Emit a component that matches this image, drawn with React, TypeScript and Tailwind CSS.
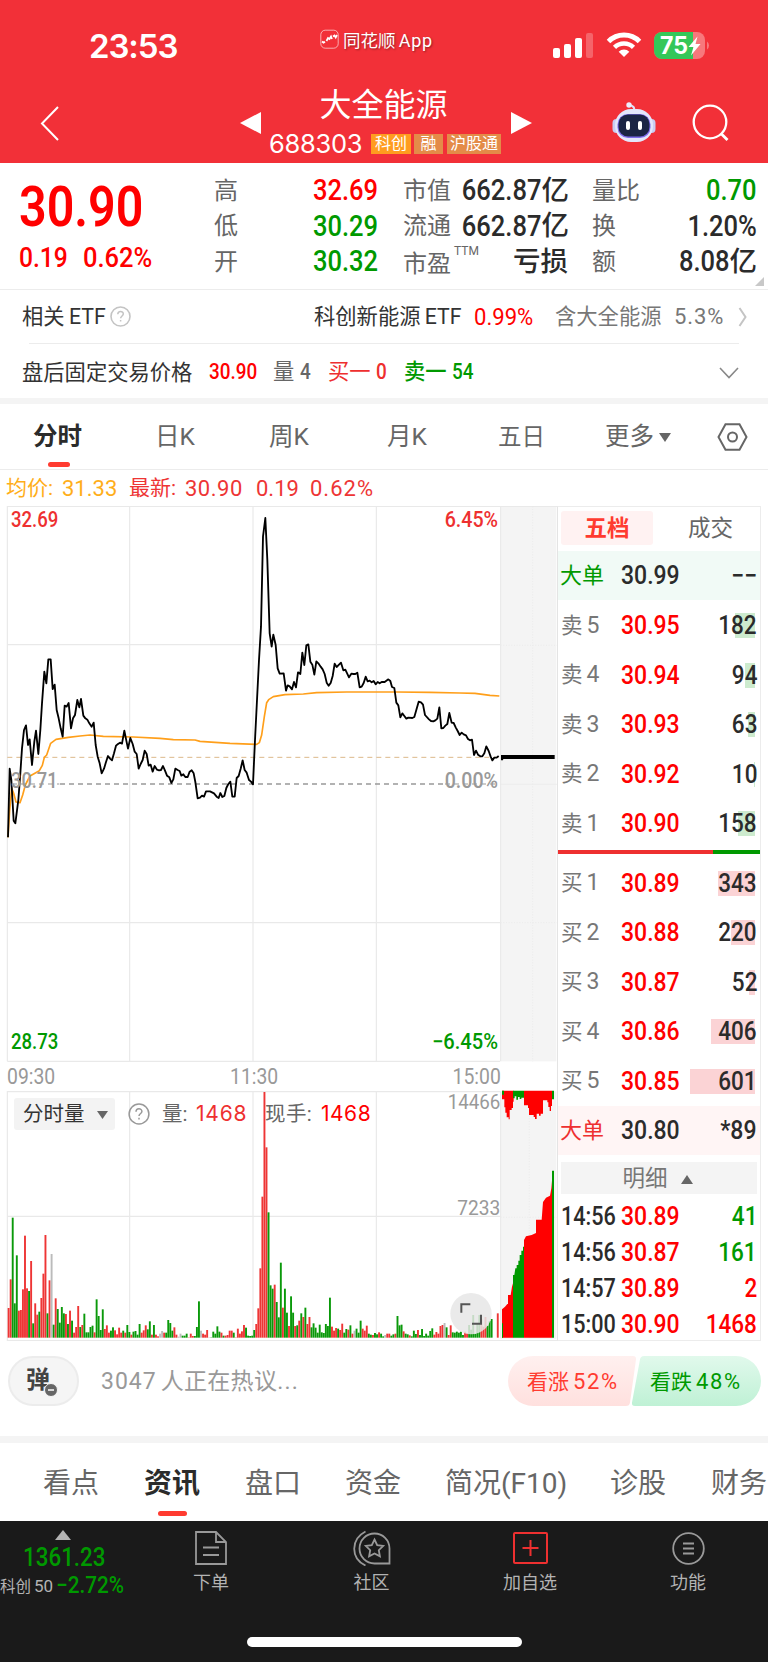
import clsx from 'clsx'

const PRICE_LINE =
  '24,1012 29,806 34,840 41,962 46,970 55,900 61,820 66,745 72,690 78,676 84,735 89,718 96,795 103,725 108,692 115,762 121,690 126,610 133,515 139,550 145,478 152,478 158,567 164,554 170,630 176,655 182,685 188,710 194,617 200,620 206,609 213,685 219,655 225,645 232,600 238,622 243,597 250,647 256,655 262,659 268,670 275,680 281,668 287,735 293,770 299,790 305,820 312,806 318,786 324,768 330,776 336,781 342,760 348,737 354,732 360,728 366,731 373,692 379,722 384,746 391,714 398,732 404,755 410,762 416,806 422,792 428,780 434,752 440,762 446,797 452,794 458,815 464,798 471,809 477,811 483,810 489,798 495,812 501,827 508,832 514,849 520,838 526,806 533,810 539,813 544,827 550,823 556,831 563,831 569,815 575,811 581,820 586,846 593,895 600,893 606,887 612,890 618,874 630,874 642,880 650,890 656,894 661,879 667,891 673,888 679,864 685,852 691,845 697,890 704,890 710,834 716,828 722,806 728,781 734,810 740,818 747,840 753,845 759,853 765,720 771,600 777,480 783,380 789,110 796,54 802,180 809,400 815,440 820,404 827,435 833,505 839,521 851,520 858,572 863,556 869,559 876,568 882,546 888,562 894,517 901,522 907,458 913,495 919,436 925,433 931,485 937,494 943,524 949,484 955,490 962,500 968,508 974,522 980,548 986,557 992,549 998,528 1004,491 1010,501 1017,494 1023,488 1030,511 1036,509 1047,532 1054,521 1060,522 1066,522 1072,518 1079,562 1085,560 1091,549 1097,530 1103,544 1109,542 1115,547 1121,543 1127,553 1133,546 1139,550 1145,546 1154,546 1165,538 1171,543 1176,561 1183,564 1189,608 1195,616 1201,652 1207,640 1213,648 1219,656 1225,653 1237,654 1243,651 1250,626 1256,605 1263,607 1269,614 1275,645 1287,658 1293,663 1300,664 1306,661 1312,656 1318,622 1324,685 1330,684 1336,677 1342,672 1348,639 1355,668 1361,669 1367,682 1373,693 1379,705 1385,698 1391,703 1398,706 1404,717 1410,721 1416,719 1422,765 1428,752 1434,764 1441,769 1447,769 1453,760 1459,739 1466,753 1472,770 1477,781 1483,773 1490,773 1496,768'

const AVERAGE_LINE =
  'M24,1012 L29,930 L35,865 L41,880 L48,906 L60,908 L68,885 L76,855 L90,828 L118,812 L127,796 L133,772 L140,765 L152,730 L168,718 L205,712 L240,708 L270,705 L310,709 L400,711 L480,715 L520,719 L585,720 L600,724 L690,730 L770,733 L778,728 L785,705 L793,650 L800,608 L806,599 L820,590 L855,584 L910,582 L950,578 L1040,576 L1190,576 L1290,577 L1380,579 L1425,580 L1470,586 L1498,588'

// top of each minute bar followed by its colour: r up, g down, n flat
const VOLUME =
  '834r 748r 563g 820g 676g 842r 840r 778r 617r 775r 783g 693r 880g 820r 854r 845g 804r 731r 615r 850g 751r 672n 884g 805r 837g 878g 831g 850g 852r 882g 842r 872g 908r 891r 828r 891g 885r 851g 907g 907g 891g 887g 907r 808g 858g 900g 838g 897r 886r 908r 902g 892g 901r 913r 893r 908r 902g 908r 885g 906g 914r 905g 903g 914g 882g 908r 901r 886r 898g 874g 914r 885g 914r 919r 911n 903n 908r 908g 870g 879g 902g 892r 914r 920n 911n 917g 917g 911g 922r 911r 918r 918g 891g 814g 902n 911r 914r 900r 922n 922g 905g 911g 889g 905g 908r 917g 917r 915r 902r 902r 908g 922r 896r 911r 904r 885r 893g 917g 918g 917g 900g 882r 835r 715r 500r 186r 352r 547g 766g 776g 764r 816g 862g 698g 833r 776g 848g 888r 799g 848g 888r 886g 872r 850g 861r 833g 882r 861r 892g 880g 893g 908g 884g 907g 909g 882g 888g 803g 890r 902r 894r 896g 900r 881r 908g 897g 899r 886g 911r 902n 896g 908g 872g 896r 902r 887r 911g 914g 915r 909g 913g 907r 911g 919g 915n 911r 911r 917g 913g 911r 858g 886g 884g 904r 911g 913g 916r 919g 902g 912g 900r 915g 897g 918g 911g 917g 903g 895g 914r 906r 911r 888r 885r 879n 892g 915r 886r 907g 908g 905g 908g 905g 915g 905r 909r 885g 899g 855g 911g 880g 855g 868r 890r 861r 887g 873g 867g 923n 923n 850r'

const BAR_COLORS: Record<string, string> = {
  r: '#ee3535',
  g: '#0a990a',
  n: '#bbbbbb',
}

const bars = VOLUME.split(' ').map((item) => ({
  top: parseInt(item),
  color: BAR_COLORS[item.slice(-1)],
}))

const sells = [
  { label: '卖5', price: '30.95', amount: 182 },
  { label: '卖4', price: '30.94', amount: 94 },
  { label: '卖3', price: '30.93', amount: 63 },
  { label: '卖2', price: '30.92', amount: 10 },
  { label: '卖1', price: '30.90', amount: 158 },
]

const buys = [
  { label: '买1', price: '30.89', amount: 343 },
  { label: '买2', price: '30.88', amount: 220 },
  { label: '买3', price: '30.87', amount: 52 },
  { label: '买4', price: '30.86', amount: 406 },
  { label: '买5', price: '30.85', amount: 601 },
]

const trades = [
  { time: '14:56', price: '30.89', amount: '41', color: 'text-[#009900]' },
  { time: '14:56', price: '30.87', amount: '161', color: 'text-[#009900]' },
  { time: '14:57', price: '30.89', amount: '2', color: 'text-[#ff0000]' },
  { time: '15:00', price: '30.90', amount: '1468', color: 'text-[#ff0000]' },
]

function Din({
  children,
  right,
  narrow = 'scale-x-[0.88]',
  weight = 'font-medium',
  className,
}: {
  children: React.ReactNode
  right?: boolean
  narrow?: string
  weight?: string
  className?: string
}) {
  return (
    <span
      className={clsx(
        'inline-block whitespace-pre',
        narrow,
        weight,
        right ? 'origin-right' : 'origin-left',
        className
      )}
    >
      {children}
    </span>
  )
}

function StatusBar() {
  return (
    <div className="flex h-[80px] items-start pt-[28px] pl-[89px] text-white">
      <div className="w-[231px] pt-[2px] font-['Inter'] text-[33px] leading-[32px] font-semibold tracking-[-1.1px]">
        23:53
      </div>
      <svg className="mt-px" width="19" height="20" viewBox="0 0 19 20" fill="none">
        <rect x="0.8" y="1.2" width="17.4" height="18" rx="4.5" stroke="#fff" strokeOpacity="0.6" />
        <path
          d="M2 12.500l1.500 1.200 1.500-1M6.500 12l1.500-3 1.500 1 1.500-2.500 1 2.500M13 7.500l1.500-1 1.200 2 1.300-2.500"
          stroke="#fff"
          strokeWidth="1.700"
        />
      </svg>
      <div className="ml-1 w-[210px] pt-[3px] text-[17.500px] leading-[20px] [text-shadow:1px_1px_2px_#0006]">
        同花顺 <span className="-ml-[1px] text-[18px] tracking-[0.600px]">App</span>
      </div>
      <svg className="mt-[5px]" width="40" height="25" viewBox="0 0 40 25" fill="#fff">
        <rect x="0" y="15" width="7" height="10" rx="2" />
        <rect x="11" y="11" width="7" height="14" rx="2" />
        <rect x="22" y="5" width="7" height="20" rx="2" />
        <rect x="33" y="0" width="7" height="25" rx="2" opacity="0.25" />
      </svg>
      <svg className="mt-[4px] ml-[13px]" width="36" height="26" viewBox="0 0 36 26" fill="none">
        <path d="M2.500 9.500a22 22 0 0 1 31 0" stroke="#fff" strokeWidth="5" />
        <path d="M8.500 15.300a13.500 13.500 0 0 1 19 0" stroke="#fff" strokeWidth="4.500" />
        <path d="M18 25l-5.300-5.300a7.600 7.600 0 0 1 10.600 0z" fill="#fff" />
      </svg>
      <svg className="mt-[4px] ml-[12px]" width="57" height="27" viewBox="0 0 57 27">
        <clipPath id="battery">
          <rect width="51" height="27" rx="8" />
        </clipPath>
        <g clipPath="url(#battery)">
          <rect width="51" height="27" fill="#f7787c" />
          <rect width="39" height="27" fill="#34c759" />
        </g>
        <path d="M53 9.500a5 5 0 0 1 0 8z" fill="#f7787c" />
        <text x="6" y="22" fill="#fff" fontFamily="Inter" fontSize="24" fontWeight="700" textLength="28" lengthAdjust="spacingAndGlyphs">
          75
        </text>
        <path d="M43.500 4.500L34.500 15h5l-2.500 8.500L46.500 12h-5z" fill="#fff" />
      </svg>
    </div>
  )
}

function Header() {
  return (
    <header className="h-[163px] bg-[#f23038] text-white">
      <StatusBar />
      <div className="flex h-[83px] pl-[39px]">
        <svg className="mt-[25px]" width="21" height="37" viewBox="0 0 21 37" fill="none">
          <path d="M19 2L3 18.500 19 35" stroke="#fff" strokeWidth="2" />
        </svg>
        <svg className="mt-[31px] ml-[180px]" width="21" height="24" viewBox="0 0 21 24">
          <path d="M0 12L21 1v22z" fill="#fff" />
        </svg>
        <div className="w-[250px]">
          <div className="mt-[5px] pr-[5px] text-center text-[32px] leading-[40px]">大全能源</div>
          <div className="mt-[8px] flex items-center pl-[8px]">
            <span className="w-[102px] font-['Inter'] text-[25.500px] leading-[22px] tracking-[-0.300px]">
              688303
            </span>
            <span className="h-[20px] w-[40px] bg-[#ff9c1f] text-center text-[16px] leading-[19px]">
              科创
            </span>
            <span className="ml-[3px] h-[20px] w-[29px] bg-[#e48b48] text-center text-[16px] leading-[19px]">
              融
            </span>
            <span className="ml-[4px] h-[20px] w-[54px] bg-[#e48b48] text-center text-[16px] leading-[19px]">
              沪股通
            </span>
          </div>
        </div>
        <svg className="mt-[31px]" width="21" height="24" viewBox="0 0 21 24">
          <path d="M21 12L0 1v22z" fill="#fff" />
        </svg>
        <svg className="mt-[22px] ml-[80px]" width="44" height="41" viewBox="0 0 44 41">
          <path d="M22 8c1-3-1-4-4-5" stroke="#dfe2fa" strokeWidth="2" fill="none" />
          <circle cx="17" cy="3" r="2.700" fill="#eceefe" />
          <rect x="0.500" y="17" width="9" height="14" rx="4" fill="#c9cdf2" />
          <rect x="34.500" y="17" width="9" height="14" rx="4" fill="#c9cdf2" />
          <rect x="3" y="7" width="38" height="33" rx="16" fill="#e3e6fb" />
          <rect x="5.500" y="12" width="33" height="24" rx="10.500" fill="#7e6bea" />
          <rect x="6.500" y="12.500" width="31" height="22" rx="9.500" fill="#1b2444" />
          <rect x="14" y="19" width="4" height="9" rx="2" fill="#fff" />
          <rect x="26" y="19" width="4" height="9" rx="2" fill="#fff" />
        </svg>
        <svg className="mt-[24px] ml-[36px]" width="38" height="38" viewBox="0 0 38 38" fill="none">
          <circle cx="18" cy="18" r="16.300" stroke="#fff" strokeWidth="2.300" />
          <path d="M29.500 30L35.500 36" stroke="#fff" strokeWidth="2.800" />
        </svg>
      </div>
    </header>
  )
}

function Stat({
  label,
  value,
  unit,
  color = 'text-[#2b2b2b]',
  sup,
}: {
  label: string
  value?: string
  unit?: string
  color?: string
  sup?: string
}) {
  return (
    <div className="flex h-[35.500px] items-center justify-between whitespace-nowrap">
      <span className={clsx('flex text-[24px] text-[#666]', sup && 'mt-[5px]')}>
        {label}
        {sup && <sup className="top-0 -mt-[3px] ml-[3px] text-[12px] leading-[16px]">{sup}</sup>}
      </span>
      <span className={clsx('flex items-center', color)}>
        {value && (
          <Din right className="text-[29px]">
            {value}
          </Din>
        )}
        {unit && <span className="text-[27.500px] leading-[30px] font-medium">{unit}</span>}
      </span>
    </div>
  )
}

function Quote() {
  return (
    <section className="relative flex h-[127px] border-b border-[#ececec]">
      <div className="w-[214px] pl-[19px] text-[#ff0000]">
        <Din className="mt-[16px] text-[55px] leading-[56px]" weight="font-semibold">
          30.90
        </Din>
        <div className="mt-[8px] flex text-[28px] leading-[30px]">
          <Din className="w-[64px]">0.19</Din>
          <Din narrow="scale-x-[0.91]">0.62%</Din>
        </div>
      </div>
      <div className="w-[164px] pt-[10px]">
        <Stat label="高" value="32.69" color="text-[#ff0000]" />
        <Stat label="低" value="30.29" color="text-[#009900]" />
        <Stat label="开" value="30.32" color="text-[#009900]" />
      </div>
      <div className="ml-[25px] w-[165px] pt-[10px]">
        <Stat label="市值" value="662.87" unit="亿" />
        <Stat label="流通" value="662.87" unit="亿" />
        <Stat label="市盈" unit="亏损" sup="TTM" />
      </div>
      <div className="ml-[24px] w-[165px] pt-[10px]">
        <Stat label="量比" value="0.70" color="text-[#009900]" />
        <Stat label="换" value="1.20%" />
        <Stat label="额" value="8.08" unit="亿" />
      </div>
      <svg className="absolute right-[4px] bottom-[3px]" width="9" height="9" viewBox="0 0 9 9">
        <path d="M9 0v9H0z" fill="#c8c8c8" />
      </svg>
    </section>
  )
}

function Related() {
  return (
    <section className="text-[21.300px] whitespace-nowrap text-[#333]">
      <div className="flex h-[53px] items-center pl-[22px]">
        <span className="w-[88px]">
          相关 <span className="-ml-[1px]">ETF</span>
        </span>
        <svg width="21" height="21" viewBox="0 0 21 21" fill="none" stroke="#c4c4c4">
          <circle cx="10.500" cy="10.500" r="9.500" strokeWidth="1.600" />
          <path d="M7.800 8.300c0-3.800 5.600-3.700 5.500-.3 0 1.800-2.700 2.200-2.700 4.300M10.600 14v1.600" strokeWidth="1.500" />
        </svg>
        <span className="ml-[183px] w-[160px]">
          科创新能源 <span className="-ml-[1px]">ETF</span>
        </span>
        <span className="w-[81px] text-[#ff0000]">
          <Din className="text-[24px]" narrow="scale-x-[0.92]" weight="font-normal">
            0.99%
          </Din>
        </span>
        <span className="w-[119px] text-[#777]">含大全能源</span>
        <span className="w-[64px] text-[22px] tracking-[0.900px] text-[#777]">5.3%</span>
        <svg width="9" height="20" viewBox="0 0 9 20" fill="none">
          <path d="M1.500 1l6 9-6 9" stroke="#c4c4c4" strokeWidth="2" />
        </svg>
      </div>
      <div className="mx-[29px] h-px bg-[#ececec]" />
      <div className="flex h-[54px] items-center pt-[3px] pl-[22px]">
        <span className="w-[187px]">盘后固定交易价格</span>
        <span className="w-[64px] text-[#ff0000]">
          <Din className="text-[21.500px]">30.90</Din>
        </span>
        <span className="w-[55px] text-[#666]">
          量 <Din className="text-[21.500px]">4</Din>
        </span>
        <span className="w-[76px] text-[#ee2f2f]">
          买一 <Din className="text-[21.500px]">0</Din>
        </span>
        <span className="w-[315px] text-[#009900]">
          <span className="font-medium">卖一</span> <Din className="text-[21.500px]">54</Din>
        </span>
        <svg width="20" height="12" viewBox="0 0 20 12" fill="none">
          <path d="M1 1l9 9.500L19 1" stroke="#888" strokeWidth="1.600" />
        </svg>
      </div>
    </section>
  )
}

function ChartTabs() {
  return (
    <nav className="flex h-[66px] items-center border-b border-[#ececec] pt-[2px] pl-[33px] text-[24.500px] whitespace-nowrap text-[#666]">
      <div className="relative w-[122px] font-bold text-[#2b2b2b]">
        分时
        <span className="absolute top-[43px] left-[15px] h-[5px] w-[22px] rounded-full bg-[#ff3b30]" />
      </div>
      <div className="w-[114px]">日K</div>
      <div className="w-[118px]">周K</div>
      <div className="w-[111px]">月K</div>
      <div className="w-[107px] text-[23.500px]">五日</div>
      <div className="flex w-[112px] items-center">
        更多
        <svg className="ml-[5px]" width="12" height="9" viewBox="0 0 12 9">
          <path d="M0 0h12L6 9z" fill="#666" />
        </svg>
      </div>
      <svg className="-mt-[2px]" width="31" height="28" viewBox="0 0 31 28" fill="none" stroke="#666" strokeWidth="2">
        <path d="M8.500 1.200h14L29.500 14l-7 12.800h-14L1.500 14z" />
        <circle cx="15.500" cy="14" r="4.500" />
      </svg>
    </nav>
  )
}

function PriceChart() {
  return (
    <svg className="block" width="557" height="556" viewBox="0 18 1671 1668" fill="none">
      <rect x="1501" y="18" width="168" height="1666" fill="#f4f4f4" />
      <g stroke="#e9e9e9" strokeWidth="3.500">
        <path d="M22 1684V19.500H1671M389 19V1684M759 19V1684M1129 19V1684M1502 19V1684M22 434H1500M22 1268H1500M22 1684H1500" />
        <path d="M1598 19V1684M1502 436H1671M1502 1268H1671" strokeDasharray="3 5" strokeWidth="2.500" />
        <path d="M1502 853H1671" strokeWidth="2" />
      </g>
      <path d="M22 772H1500" stroke="#dcb98a" strokeWidth="3" strokeDasharray="15 12" />
      <path d="M180 852H1330" stroke="#999" strokeWidth="4" strokeDasharray="15 12" />
      <path d={AVERAGE_LINE} stroke="#ff9f1a" strokeWidth="5" strokeLinejoin="round" />
      <polyline points={PRICE_LINE} stroke="#000" strokeWidth="5.500" strokeLinejoin="round" />
      <path d="M1504 771H1664" stroke="#000" strokeWidth="12" />
      <path d="M1503 765h9l-3 16h-6z" fill="#000" />
      <g fontFamily="Roboto" fontSize="64" fontWeight="500">
        <text x="33" y="80" fill="#ee3030" textLength="142" lengthAdjust="spacingAndGlyphs">
          32.69
        </text>
        <text x="1334" y="80" fill="#ee3030" textLength="160" lengthAdjust="spacingAndGlyphs">
          6.45%
        </text>
        <text x="33" y="863" fill="#999" textLength="140" lengthAdjust="spacingAndGlyphs">
          30.71
        </text>
        <text x="1334" y="863" fill="#999" textLength="160" lengthAdjust="spacingAndGlyphs">
          0.00%
        </text>
        <text x="33" y="1647" fill="#009900" textLength="142" lengthAdjust="spacingAndGlyphs">
          28.73
        </text>
        <text x="1296" y="1647" fill="#009900" textLength="198" lengthAdjust="spacingAndGlyphs">
          −6.45%
        </text>
      </g>
      <path d="M36 852H178M1335 852H1490" stroke="#999" strokeWidth="3" strokeDasharray="15 12" />
    </svg>
  )
}

function VolumeChart() {
  return (
    <div className="relative h-[254px]">
      <svg className="block" width="557" height="254" viewBox="0 180 1671 762" fill="none">
        <rect x="1502" y="184" width="167" height="742" fill="#f4f4f4" />
        <g stroke="#e9e9e9" strokeWidth="3.500">
          <path d="M1671 931.500H22V185H1502M389 185V925M759 185V925M1129 185V925M1502 185V925M22 559H1502" />
          <path d="M1588 185V925M1502 562H1671" strokeDasharray="3 5" strokeWidth="2.500" />
        </g>
        {bars.map((bar, i) => (
          <rect
            key={i}
            x={23 + i * 6.14}
            y={bar.top}
            width="5.700"
            height={923 - bar.top}
            fill={bar.color}
          />
        ))}
        <path
          d="M1506 923V838l9-8 7-8 2 0V795h8l4-25 3-10V923zM1572 923V630l6-11 17-4 13-6V569h17l4-53 9-13 12-6 4-22 2-23V923z"
          fill="#ff0000"
        />
        <path
          d="M1539 923V735h4l3-20 4 0V705h5V692h4V675h5V662h5V650h3V923zM1656 923V422h6V923zM1506 923V880h3v43z"
          fill="#009900"
        />
        <path
          d="M1506 182v26h7v24h3v16h4v14h6v6h3v-28h6v-6h4v-19h2v-33zM1572 182v44h12v8h3v21h14v6h4v6h5v-16h7v6h5v-6h7v-40h13v6h3v14h4v12h4v-15h3v-46z"
          fill="#ff0000"
        />
        <path
          d="M1539 182v23h5v-6h5v10h5v-8h5v6h5v-4h8v-21zM1656 182v26h6v-26zM1506 182h6v12h-6z"
          fill="#009900"
        />
        <g fontFamily="Roboto" fontSize="62" fill="#999">
          <text x="1343" y="237" textLength="158" lengthAdjust="spacingAndGlyphs">
            14466
          </text>
          <text x="1372" y="555" textLength="129" lengthAdjust="spacingAndGlyphs">
            7233
          </text>
        </g>
        <circle cx="1413" cy="851" r="62" fill="#e6e6e6" fillOpacity="0.850" />
        <path d="M1384 848V823h27M1443 854v27h-27" stroke="#555" strokeWidth="6" />
      </svg>
      <div className="absolute top-[8px] left-[14px] flex items-center text-[20.500px] whitespace-nowrap text-[#666]">
        <div className="flex h-[32px] w-[101px] items-center rounded-[3px] bg-[#f3f3f3] pt-px pl-[9px] text-[#333]">
          分时量
          <svg className="ml-[12px]" width="11" height="8" viewBox="0 0 11 8">
            <path d="M0 0h11L5.500 8z" fill="#666" />
          </svg>
        </div>
        <svg className="ml-[13px]" width="22" height="22" viewBox="0 0 22 22" fill="none" stroke="#999">
          <circle cx="11" cy="11" r="9.900" strokeWidth="1.500" />
          <path d="M8 8.800c0-4 6-3.900 5.900-.3 0 1.900-2.900 2.200-2.900 4.600M11 14.800v1.800" strokeWidth="1.500" />
        </svg>
        <div className="ml-[12px] flex w-[103px] items-center">
          <span className="w-[34px]">量:</span>
          <span className="font-['Inter'] text-[21px] tracking-[0.800px] text-[#ee3030]">1468</span>
        </div>
        <div className="flex items-center">
          <span className="w-[56px] tracking-[0.400px]">现手:</span>
          <span className="font-['Inter'] text-[21px] tracking-[0.500px] text-[#ff0000]">1468</span>
        </div>
      </div>
    </div>
  )
}

function Level({
  label,
  price,
  amount,
  tone,
}: {
  label: string
  price: string
  amount: number
  tone: 'sell' | 'buy'
}) {
  return (
    <div className="flex h-[49.500px] items-center pl-[3px]">
      <span className="flex w-[60px] items-baseline text-[21.500px] text-[#777]">
        {label[0]}
        <span className="ml-[4px] text-[23px]">{label[1]}</span>
      </span>
      <Din className="text-[25px] text-[#ff0000]" narrow="scale-x-[0.92]">
        {price}
      </Din>
      <div className="relative mr-[3px] ml-auto flex h-[25px] items-center justify-end">
        <span
          className={clsx(
            'absolute right-[2px] h-[25px]',
            tone === 'sell' ? 'bg-[#cdebce]' : 'bg-[#fbd3d5]'
          )}
          style={{ width: amount * 0.108 }}
        />
        <Din right className="relative text-[25px] text-[#2b2b2b]" narrow="scale-x-[0.9]">
          {amount}
        </Din>
      </div>
    </div>
  )
}

function BigOrder({
  price,
  amount,
  className,
}: {
  price: string
  amount: string
  className: string
}) {
  return (
    <div className={clsx('flex h-[49px] items-center pr-[3px] pl-[2px]', className)}>
      <span className="w-[61px] text-[22px]">大单</span>
      <Din className="text-[25px] text-[#2b2b2b]" narrow="scale-x-[0.92]">
        {price}
      </Din>
      <Din right className="ml-auto text-[25px] text-[#2b2b2b]" narrow="scale-x-[0.92]">
        {amount}
      </Din>
    </div>
  )
}

function OrderBook() {
  return (
    <aside className="h-[835px] w-[204px] border border-[#ececec] border-l-[#e4e4e4] bg-white whitespace-nowrap">
      <div className="flex h-[44px] pt-[4px] pl-[3px]">
        <div className="h-[34px] w-[93px] rounded-[3px] bg-[#fff2f2] text-center text-[22.500px] leading-[34px] font-bold text-[#ff3b30]">
          五档
        </div>
        <div className="w-[108px] pl-[8px] text-center text-[22.500px] leading-[34px] text-[#666]">
          成交
        </div>
      </div>
      <BigOrder price="30.99" amount="−−" className="bg-[#f1faf6] text-[#009900]" />
      <div className="pt-px">
        {sells.map((row) => (
          <Level {...row} tone="sell" key={row.label} />
        ))}
      </div>
      <div className="mt-[1px] flex h-[4px]">
        <span className="w-[155px] bg-[#ee3030]" />
        <span className="flex-1 bg-[#009900]" />
      </div>
      <div className="mt-[5px]">
        {buys.map((row) => (
          <Level {...row} tone="buy" key={row.label} />
        ))}
      </div>
      <BigOrder price="30.80" amount="*89" className="bg-[#fff5f5] text-[#ee3030]" />
      <div className="mx-[3px] mt-[7px] flex h-[32px] items-center justify-center bg-[#f4f4f4] pt-[2px] pr-[3px] text-[22.500px] text-[#777]">
        明细
        <svg className="ml-[13px]" width="12" height="9" viewBox="0 0 12 9">
          <path d="M0 9h12L6 0z" fill="#666" />
        </svg>
      </div>
      <div className="mt-[5px]">
        {trades.map((trade, i) => (
          <div className="flex h-[36px] items-center pr-[3px] pl-[3px] text-[25px]" key={i}>
            <span className="w-[60px] text-[#2b2b2b]">
              <Din narrow="scale-x-[0.865]">{trade.time}</Din>
            </span>
            <Din className="text-[#ff0000]" narrow="scale-x-[0.92]">
              {trade.price}
            </Din>
            <Din right className={clsx('ml-auto', trade.color)} narrow="scale-x-[0.9]">
              {trade.amount}
            </Din>
          </div>
        ))}
      </div>
    </aside>
  )
}

function ChatBar() {
  return (
    <section className="flex h-[92px] items-start pt-[12px] pl-[8px]">
      <div className="relative h-[50px] w-[71px] rounded-[25px] border-2 border-[#ececec] bg-[#f5f5f5] pl-[16px] text-[24px] leading-[44px] font-bold text-[#444]">
        弹
        <svg className="absolute top-[25px] left-[34px]" width="14" height="14" viewBox="0 0 14 14">
          <circle cx="7" cy="7" r="6.500" fill="#666" stroke="#f5f5f5" />
          <path d="M4 7h6" stroke="#fff" strokeWidth="1.500" />
        </svg>
      </div>
      <div className="ml-[22px] w-[407px] text-[23px] leading-[52px] whitespace-nowrap text-[#999]">
        <span className="tracking-[1px]">3047</span>
        <span className="ml-[4px] tracking-[0.300px]">人正在热议</span>
        <span className="tracking-[1.200px]">...</span>
      </div>
      <div className="relative h-[50px] w-[253px]">
        <svg className="block" width="253" height="50" viewBox="0 0 253 50">
          <defs>
            <linearGradient id="up" x1="0" y1="0" x2="0" y2="1">
              <stop offset="0" stopColor="#fff0ef" />
              <stop offset="1" stopColor="#ffe0de" />
            </linearGradient>
            <linearGradient id="down" x1="0" y1="0" x2="0" y2="1">
              <stop offset="0" stopColor="#e1f9ec" />
              <stop offset="1" stopColor="#bff1d5" />
            </linearGradient>
          </defs>
          <path d="M25 0H125q3.500 0 3 3.500L122 46.500q-.5 3.500-4 3.500H25A25 25 0 0 1 25 0z" fill="url(#up)" />
          <path d="M136 0H228a25 25 0 0 1 0 50H127q-3.500 0-3-3.500L132 3.500q.5-3.500 4-3.500z" fill="url(#down)" />
        </svg>
        <div className="absolute inset-0 flex text-[21px] leading-[51px] whitespace-nowrap">
          <span className="w-[123px] pl-[19px] text-[#ff3b30]">
            看涨<span className="ml-[4px] text-[22px] tracking-[1.600px]">52%</span>
          </span>
          <span className="pl-[19px] text-[#009900]">
            看跌<span className="ml-[4px] text-[22px] tracking-[1.600px]">48%</span>
          </span>
        </div>
      </div>
    </section>
  )
}

function InfoTabs() {
  return (
    <nav className="flex h-[78px] items-center overflow-hidden pt-[3px] pl-[43px] text-[28px] whitespace-nowrap text-[#666]">
      <div className="w-[101px] shrink-0">看点</div>
      <div className="relative w-[101px] shrink-0 font-bold text-[#2b2b2b]">
        资讯
        <span className="absolute top-[48px] left-[14px] h-[5px] w-[29px] rounded-full bg-[#ff3b30]" />
      </div>
      <div className="w-[100px] shrink-0">盘口</div>
      <div className="w-[100px] shrink-0">资金</div>
      <div className="w-[165px] shrink-0">简况(F10)</div>
      <div className="w-[101px] shrink-0">诊股</div>
      <div className="shrink-0">财务</div>
    </nav>
  )
}

function BottomBar() {
  return (
    <footer className="relative flex h-[141px] bg-[#1a1a1a] text-[18px] whitespace-nowrap text-[#b3b3b3]">
      <div className="w-[131px] pt-[9px]">
        <svg className="ml-[55px] block" width="16" height="10" viewBox="0 0 16 10">
          <path d="M8 0l8 10H0z" fill="#b3b3b3" />
        </svg>
        <div className="mt-[3px] pl-[23px]">
          <Din className="text-[26px] leading-[28px] text-[#009900]" narrow="scale-x-[0.86]">
            1361.23
          </Din>
        </div>
        <div className="flex h-[26px] items-center text-[15.500px]">
          <span className="w-[58px] pt-[2px]">
            科创<span className="ml-[3px] text-[17px]">50</span>
          </span>
          <Din className="text-[23px] text-[#009900]" narrow="scale-x-[0.9]">
            −2.72%
          </Din>
        </div>
      </div>
      <div className="flex w-[160px] flex-col items-center pt-[10px]">
        <svg width="32" height="34" viewBox="0 0 32 34" fill="none" stroke="#999" strokeWidth="1.800">
          <path d="M1 1h20l10 10v22H1zM21 1v10h10M8 16.500h16M8 24h16" />
        </svg>
        <span className="mt-[5px] leading-[26px]">下单</span>
      </div>
      <div className="flex w-[161px] flex-col items-center pt-[9px]">
        <svg width="38" height="36" viewBox="0 0 38 36" fill="none" stroke="#999" strokeWidth="1.800">
          <path d="M21.500 3.500a14.800 14.800 0 0 0 0 30H36.500v-15a15 15 0 0 0-15-15z" />
          <path d="M12.500 1.500C-2 9-3 28 12.500 35.500" />
          <path d="M21.500 9.500l2.700 5.600 6 .8-4.400 4.300 1.100 6.100-5.400-2.900-5.400 2.900 1.100-6.100-4.400-4.300 6-.8z" />
        </svg>
        <span className="mt-[4px] leading-[26px]">社区</span>
      </div>
      <div className="flex w-[156px] flex-col items-center pt-[11px]">
        <svg width="35" height="32" viewBox="0 0 35 32" fill="none" stroke="#ee3030" strokeWidth="2">
          <rect x="1" y="1" width="33" height="30" rx="1" />
          <path d="M17.500 8v16M9.500 16h16" />
        </svg>
        <span className="mt-[6px] leading-[26px]">加自选</span>
      </div>
      <div className="flex w-[160px] flex-col items-center pt-[11px]">
        <svg width="33" height="33" viewBox="0 0 33 33" fill="none" stroke="#999" strokeWidth="1.800">
          <circle cx="16.500" cy="16.500" r="15.300" />
          <path d="M11 11.500h11M11 16.500h11M11 21.500h11" />
        </svg>
        <span className="mt-[5px] leading-[26px]">功能</span>
      </div>
      <span className="absolute top-[116px] left-[247px] h-[10px] w-[275px] rounded-full bg-white" />
    </footer>
  )
}

export default function App() {
  return (
    <main className="h-[1662px] w-[768px] overflow-hidden bg-white font-['Roboto','Noto_Sans_CJK_SC',sans-serif]">
      <Header />
      <Quote />
      <Related />
      <div className="h-[6px] bg-[#f4f4f4]" />
      <ChartTabs />
      <div className="flex h-[36px] items-center pt-px pl-[6px] text-[21px] whitespace-nowrap text-[#ee3535]">
        <span className="w-[56px] text-[#ffae1a]">均价:</span>
        <span className="w-[67px] text-[22px] text-[#ffae1a]">31.33</span>
        <span className="w-[56px]">最新:</span>
        <span className="w-[71px] text-[22px] tracking-[0.500px]">30.90</span>
        <span className="w-[54px] text-[22px]">0.19</span>
        <span className="text-[22px] tracking-[1px]">0.62%</span>
      </div>
      <div className="flex h-[838px]">
        <div className="w-[557px]">
          <PriceChart />
          <div className="relative flex h-[28px] items-center pl-[7px] text-[22px] text-[#999]">
            <span className="w-[223px]">
              <Din weight="font-normal">09:30</Din>
            </span>
            <span className="w-[271px]">
              <Din weight="font-normal">11:30</Din>
            </span>
            <Din right className="absolute right-[56px]" weight="font-normal">
              15:00
            </Din>
          </div>
          <VolumeChart />
        </div>
        <OrderBook />
      </div>
      <ChatBar />
      <div className="h-[7px] bg-[#f4f4f4]" />
      <InfoTabs />
      <BottomBar />
    </main>
  )
}
